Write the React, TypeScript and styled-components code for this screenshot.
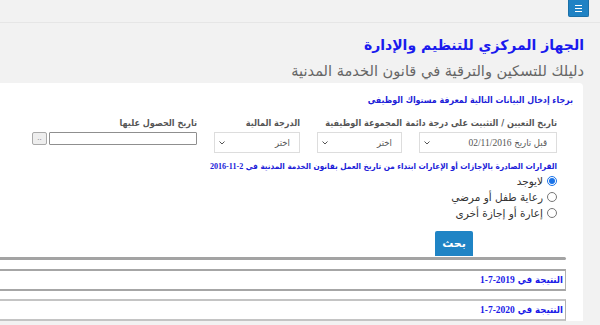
import React from 'react';
import styled, { createGlobalStyle } from 'styled-components';

const GlobalStyle = createGlobalStyle`
  html, body {
    margin: 0;
    padding: 0;
    background: #f2f2f2;
    direction: rtl;
    font-family: "DejaVu Sans", "Noto Sans", sans-serif;
    overflow: hidden;
  }
`;

const condensed = `"DejaVu Sans Condensed", "DejaVu Sans", sans-serif`;

const TopBar = styled.div`
  height: 22px;
  border-bottom: 1px solid #e6e6e6;
  display: flex;
  align-items: flex-start;
  padding-right: 11px;
`;

const MenuButton = styled.button`
  width: 21px;
  height: 17px;
  padding: 0;
  border: 1px solid #1b70a8;
  border-top: none;
  border-radius: 0 0 2px 2px;
  background: #1f82c4;
  display: flex;
  flex-direction: column;
  align-items: center;
  justify-content: center;
  gap: 2px;
`;

const MenuLine = styled.span`
  display: block;
  width: 7px;
  height: 1px;
  background: #ffffff;
`;

const Header = styled.div`
  padding: 10px 16px 0 0;
`;

const Title = styled.h1`
  margin: 0;
  font-size: 14px;
  font-weight: bold;
  color: #1a1aee;
  line-height: 24px;
`;

const Subtitle = styled.h2`
  margin: 2px 0 0;
  font-size: 14.6px;
  font-weight: normal;
  color: #666666;
  line-height: 24px;
`;

const Panel = styled.div`
  margin: 0 17px 0 0;
  background: #ffffff;
  border-radius: 0 4px 0 0;
  height: 238px;
  padding: 10px 10px 0 0;
  box-sizing: border-box;
`;

const Intro = styled.div`
  font-family: ${condensed};
  font-size: 8.8px;
  font-weight: bold;
  color: #2020d8;
  line-height: 14px;
`;

const FieldsRow = styled.div`
  display: flex;
  gap: 17px;
  margin: 9px 16px 0 0;
  align-items: flex-start;
`;

const Field = styled.div<{ $w: number }>`
  width: ${(p) => p.$w}px;
  display: flex;
  flex-direction: column;
`;

const Label = styled.label`
  font-family: ${condensed};
  font-size: 9px;
  font-weight: bold;
  color: #555555;
  line-height: 14px;
  height: 14px;
  margin-bottom: 2px;
  white-space: nowrap;
`;

const Select = styled.div`
  height: 21px;
  border: 1px solid #dddddd;
  box-sizing: border-box;
  display: flex;
  align-items: center;
  justify-content: space-between;
  padding: 0 9px 0 4px;
  font-family: ${condensed};
  font-size: 9.5px;
  color: #555555;
`;

const Chevron = styled.svg`
  width: 6px;
  height: 4px;
`;

const DateRow = styled.div`
  display: flex;
  gap: 2px;
  align-items: center;
`;

const DateInput = styled.div`
  width: 148px;
  height: 13px;
  border: 1px solid #8f8f8f;
  border-radius: 1px;
  box-sizing: border-box;
  background: #ffffff;
`;

const DotsButton = styled.div`
  width: 15px;
  height: 13px;
  border: 1px solid #a9a9a9;
  border-radius: 2px;
  box-sizing: border-box;
  background: #eeeeee;
  color: #777777;
  font-size: 7px;
  line-height: 10px;
  text-align: center;
`;

const Num = styled.span`
  font-family: "Liberation Serif", serif;
`;

const Notice = styled.div`
  margin: 7px 16px 0 0;
  font-family: ${condensed};
  font-size: 8.1px;
  font-weight: bold;
  color: #2020d8;
  line-height: 12px;
  white-space: nowrap;
`;

const RadioList = styled.div`
  margin: 1px 16px 0 0;
  display: flex;
  flex-direction: column;
  gap: 2px;
`;

const RadioRow = styled.label`
  display: flex;
  align-items: center;
  gap: 4px;
  font-size: 10.5px;
  color: #333333;
  line-height: 14px;
`;

const RadioDot = styled.span<{ $on?: boolean }>`
  width: 10px;
  height: 10px;
  border-radius: 50%;
  box-sizing: border-box;
  border: 1px solid ${(p) => (p.$on ? '#1a73e8' : '#767676')};
  background: #ffffff;
  display: flex;
  align-items: center;
  justify-content: center;

  &::after {
    content: '';
    display: ${(p) => (p.$on ? 'block' : 'none')};
    width: 6px;
    height: 6px;
    border-radius: 50%;
    background: #1a73e8;
  }
`;

const ButtonRow = styled.div`
  display: flex;
  margin: 11px 100px 0 0;
`;

const SearchButton = styled.button`
  width: 38px;
  height: 25px;
  border: none;
  border-radius: 2px 2px 0 0;
  background: #1f84c5;
  color: #ffffff;
  font-family: "DejaVu Sans", sans-serif;
  font-size: 11px;
  font-weight: bold;
  padding: 0;
`;

const Divider = styled.div`
  height: 3px;
  margin: 1px 7px 0 0;
  background: #a3a3a3;
  border-radius: 0 2px 2px 0;
`;

const ResultBox = styled.div<{ $light?: boolean }>`
  margin: ${(p) => (p.$light ? 8 : 9)}px 7px 0 0;
  height: 22px;
  box-sizing: border-box;
  border-top: 2px solid ${(p) => (p.$light ? '#c4c4c4' : '#a6a6a6')};
  border-bottom: 2px solid ${(p) => (p.$light ? '#c4c4c4' : '#a6a6a6')};
  border-right: 1px solid #b0b0b0;
  padding: 2px 2px 0 0;
  font-family: ${condensed};
  font-size: 9.5px;
  font-weight: bold;
  color: #1a1ae8;
  line-height: 14px;
`;

const options = ['لايوجد', 'رعاية طفل أو مرضي', 'إعارة أو إجازة أخرى'];

function Arrow() {
  return (
    <Chevron viewBox="0 0 6 4">
      <path d="M0.5 0.5 L3 3 L5.5 0.5" fill="none" stroke="#555" strokeWidth="1" />
    </Chevron>
  );
}

export default function App() {
  return (
    <>
      <GlobalStyle />
      <TopBar>
        <MenuButton aria-label="menu">
          <MenuLine />
          <MenuLine />
          <MenuLine />
        </MenuButton>
      </TopBar>
      <Header>
        <Title>الجهاز المركزي للتنظيم والإدارة</Title>
        <Subtitle>دليلك للتسكين والترقية في قانون الخدمة المدنية</Subtitle>
      </Header>
      <Panel>
        <Intro>برجاء إدخال البيانات التالية لمعرفة مستواك الوظيفي</Intro>
        <FieldsRow>
          <Field $w={138}>
            <Label>تاريخ التعيين / التثبيت على درجة دائمة</Label>
            <Select>
              <span>قبل تاريخ <Num>02/11/2016</Num></span>
              <Arrow />
            </Select>
          </Field>
          <Field $w={85}>
            <Label>المجموعة الوظيفية</Label>
            <Select>
              <span>اختر</span>
              <Arrow />
            </Select>
          </Field>
          <Field $w={86}>
            <Label>الدرجة المالية</Label>
            <Select>
              <span>اختر</span>
              <Arrow />
            </Select>
          </Field>
          <Field $w={165}>
            <Label>تاريخ الحصول عليها</Label>
            <DateRow>
              <DateInput />
              <DotsButton>..</DotsButton>
            </DateRow>
          </Field>
        </FieldsRow>
        <Notice>
          القرارات الصادرة بالإجازات أو الإعارات ابتداء من تاريخ العمل بقانون الخدمة المدنية في <Num>2-11-2016</Num>
        </Notice>
        <RadioList>
          {options.map((o, i) => (
            <RadioRow key={o}>
              <RadioDot $on={i === 0} />
              {o}
            </RadioRow>
          ))}
        </RadioList>
        <ButtonRow>
          <SearchButton>بحث</SearchButton>
        </ButtonRow>
        <Divider />
        <ResultBox>
          النتيجة في <Num>2019-7-1</Num>
        </ResultBox>
        <ResultBox $light>
          النتيجة في <Num>2020-7-1</Num>
        </ResultBox>
      </Panel>
    </>
  );
}
